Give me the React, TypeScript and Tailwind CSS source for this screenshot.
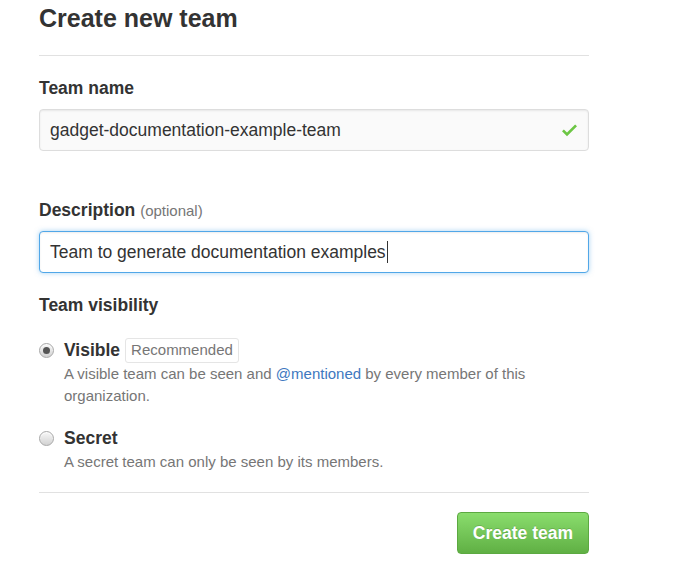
import React from "react";

function Check() {
  return (
    <svg width="15" height="20" viewBox="0 0 12 16" className="fill-[#6cc644]">
      <path d="M12 5l-8 8-4-4 1.5-1.5L4 10l6.5-6.5L12 5z" />
    </svg>
  );
}

function Radio({ checked }: { checked?: boolean }) {
  return (
    <span className="flex h-[15px] w-[15px] items-center justify-center rounded-full border border-[#a8a8a8] bg-gradient-to-b from-[#f8f8f8] to-[#d2d2d2] shadow-[inset_0_1px_1px_rgba(255,255,255,0.8)]">
      {checked && <span className="h-[7px] w-[7px] rounded-full bg-[#555]" />}
    </span>
  );
}

export default function App() {
  return (
    <div className="min-h-[577px] bg-white font-['Liberation_Sans',Arial,sans-serif] text-[#333]">
      <div className="ml-[39px] w-[550px] pb-6">
        <h1 className="text-[25px] font-bold leading-[36px]">Create new team</h1>
        <hr className="mt-[19px] border-0 border-t border-[#e1e1e1]" />

        <label className="mt-[20px] block text-[17.5px] font-bold leading-[24px]">Team name</label>
        <div className="mt-[9px] flex h-[42px] items-center justify-between rounded-[4px] border border-[#dddddd] bg-[#fafafa] pl-[10px] pr-[11px] shadow-[inset_0_1px_2px_rgba(0,0,0,0.075)]">
          <span className="text-[17.5px] leading-[24px] text-[#333]">gadget-documentation-example-team</span>
          <Check />
        </div>

        <label className="mt-[47px] block text-[17.5px] leading-[24px]">
          <span className="font-bold">Description</span>{" "}
          <span className="text-[15px] font-normal text-[#767676]">(optional)</span>
        </label>
        <div className="mt-[8px] flex h-[42px] items-center rounded-[4px] border border-[#51a7e8] bg-white pl-[10px] shadow-[inset_0_1px_2px_rgba(0,0,0,0.075),0_0_5px_rgba(81,167,232,0.5)]">
          <span className="text-[17.5px] leading-[24px] text-[#333]">Team to generate documentation examples</span>
          <span className="ml-[1px] h-[22px] w-[1px] bg-[#333]" />
        </div>

        <div className="mt-[20px] text-[17.5px] font-bold leading-[24px]">Team visibility</div>

        <div className="mt-[21px] flex">
          <div className="flex h-[25px] w-[25px] shrink-0 items-center">
            <Radio checked />
          </div>
          <div>
            <div className="flex h-[25px] items-center">
              <span className="text-[17.5px] font-bold leading-[25px]">Visible</span>
              <span className="ml-[5px] flex h-[25px] items-center rounded-[3px] border border-[#e5e5e5] px-[5px] text-[15px] text-[#767676]">
                Recommended
              </span>
            </div>
            <p className="text-[15px] leading-[22px] text-[#767676]">
              A visible team can be seen and <span className="text-[#4078c0]">@mentioned</span> by every member of this
              <br />
              organization.
            </p>
          </div>
        </div>

        <div className="mt-[19px] flex">
          <div className="flex h-[25px] w-[25px] shrink-0 items-center">
            <Radio />
          </div>
          <div>
            <div className="flex h-[25px] items-center">
              <span className="text-[17.5px] font-bold leading-[25px]">Secret</span>
            </div>
            <p className="text-[15px] leading-[22px] text-[#767676]">A secret team can only be seen by its members.</p>
          </div>
        </div>

        <hr className="mt-[19px] border-0 border-t border-[#e1e1e1]" />

        <div className="mt-[19px] flex justify-end">
          <button className="h-[42px] rounded-[4px] border border-[#5ca941] bg-gradient-to-b from-[#8add6d] to-[#60b044] px-[15px] text-[17.5px] font-bold text-white [text-shadow:0_-1px_0_rgba(0,0,0,0.15)]">
            Create team
          </button>
        </div>
      </div>
    </div>
  );
}
